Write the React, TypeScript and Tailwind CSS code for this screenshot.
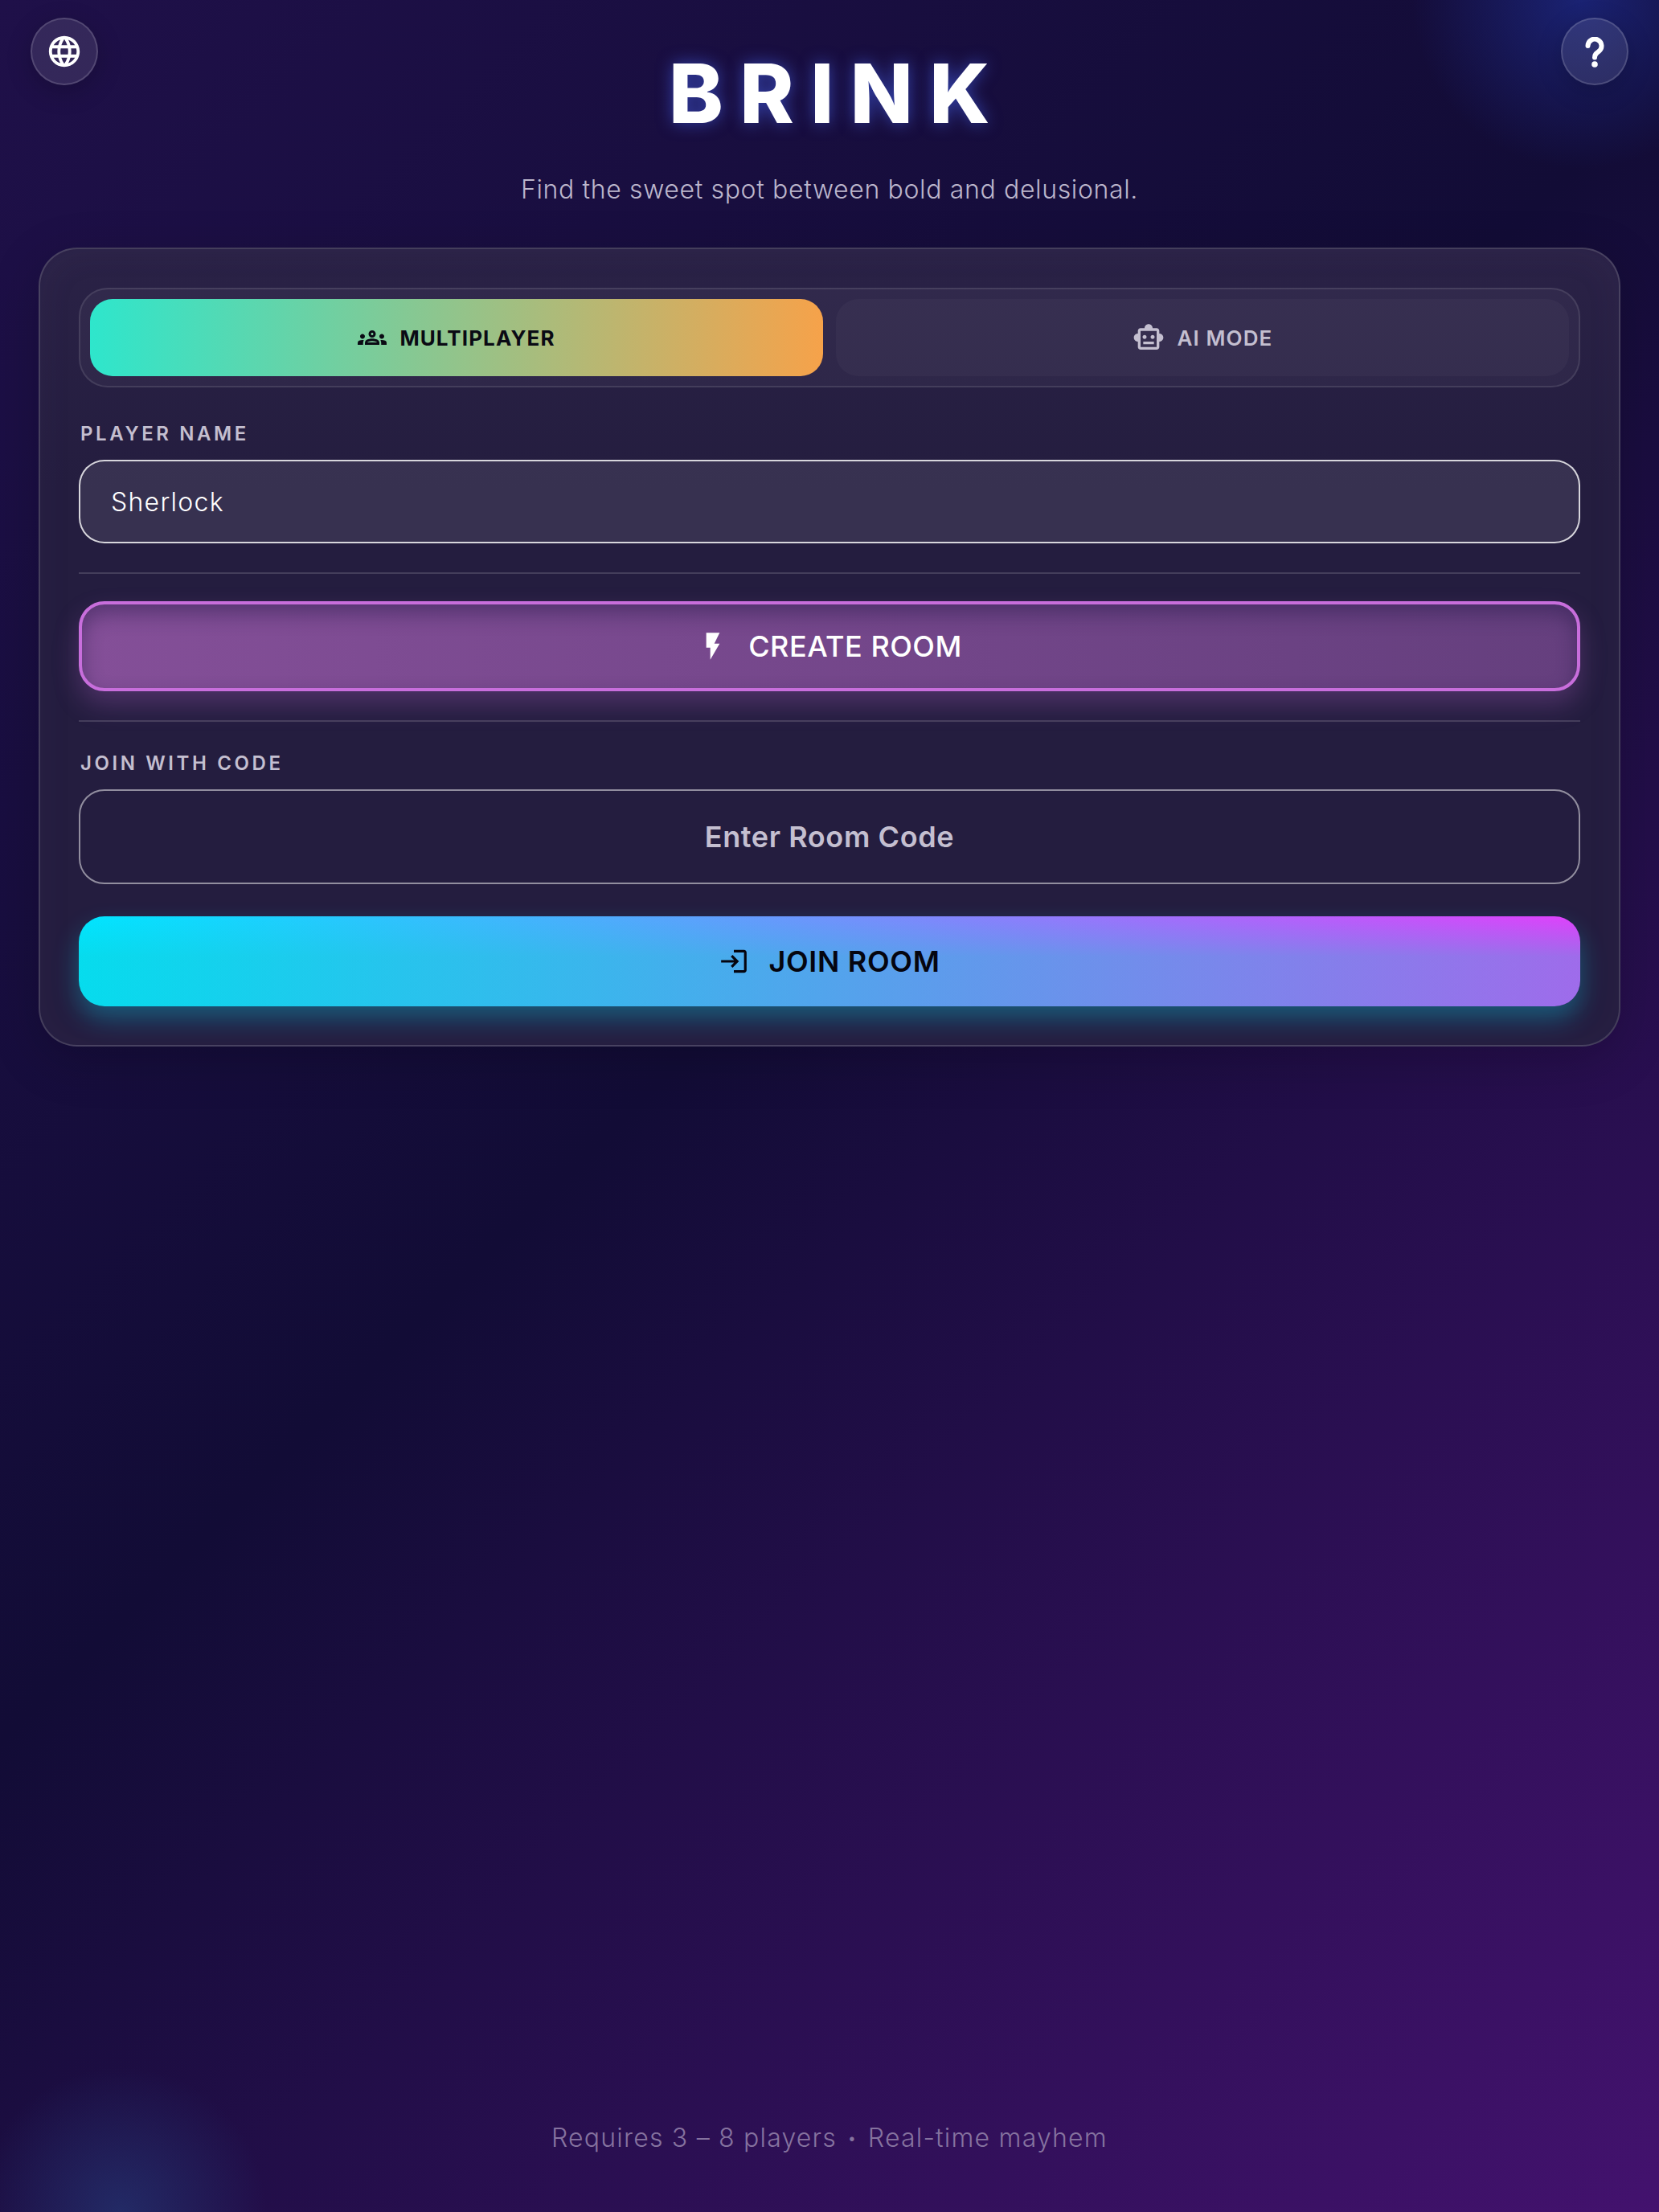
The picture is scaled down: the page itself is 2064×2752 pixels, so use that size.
import { MdOutlineGroups, MdOutlineSmartToy, MdFlashOn, MdLogin, MdOutlineLanguage } from 'react-icons/md';

const sans = 'font-["Inter","Noto_Sans",sans-serif]';

function RoundButton({ children }: { children: React.ReactNode }) {
  return (
    <button className="flex h-[84px] w-[84px] items-center justify-center rounded-full border-2 border-white/15 bg-white/10 text-white shadow-[0_8px_32px_rgba(0,0,0,0.2)]">
      {children}
    </button>
  );
}

function HelpIcon() {
  return (
    <svg className="mt-[2px]" width="24" height="38" viewBox="0 0 24 38" fill="none" stroke="currentColor" strokeWidth="6" strokeLinecap="round">
      <path d="M3.5 11a8.5 8.5 0 1 1 13.5 7c-3 2.2-5 3.6-5 7.5" />
      <circle cx="12" cy="34" r="3.8" fill="currentColor" stroke="none" />
    </svg>
  );
}

function Divider() {
  return <div className="h-[2px] w-full bg-white/15" />;
}

function FieldLabel({ children }: { children: React.ReactNode }) {
  return <div className="pl-[2px] text-[24px] leading-[32px] font-semibold tracking-[0.15em] text-[#c4bfd0]">{children}</div>;
}

export default function App() {
  return (
    <div
      className={`${sans} relative flex h-[2752px] w-[2064px] flex-col overflow-hidden bg-[radial-gradient(circle_at_1967px_0px,rgba(28,40,130,0.8),transparent_210px),radial-gradient(circle_at_151px_2752px,rgba(35,45,105,0.9),transparent_180px),linear-gradient(135deg,#1f1049_0%,#120c36_45%,#43126e_100%)]`}
    >
      {/* top corners */}
      <div className="absolute top-[22px] left-[38px]">
        <RoundButton>
          <MdOutlineLanguage className="h-[46px] w-[46px]" />
        </RoundButton>
      </div>
      <div className="absolute top-[22px] right-[38px]">
        <RoundButton>
          <HelpIcon />
        </RoundButton>
      </div>

      <header className="flex h-[308px] flex-col items-center">
        <h1 className="mt-[56px] pl-[20px] text-[102px] leading-[120px] font-extrabold tracking-[0.2em] text-white [text-shadow:0_0_20px_rgba(70,100,240,0.6)]">
          BRINK
        </h1>
        <p className="mt-[36px] text-[32px] leading-[48px] font-light tracking-[0.02em] text-[#bcb6cc]">
          Find the sweet spot between bold and delusional.
        </p>
      </header>

      <main className="mx-[48px] flex h-[994px] flex-col rounded-[48px] border-2 border-white/15 bg-[linear-gradient(180deg,#2a2246,#241d3f_30%,#241d3f)] p-[48px] shadow-[0_16px_64px_rgba(0,0,0,0.18),inset_0_0_48px_rgba(120,80,160,0.06)]">
        <div className="flex h-[124px] gap-[16px] rounded-[36px] border-2 border-white/10 bg-white/[0.04] p-[12px]">
          <button className="flex flex-1 items-center justify-center gap-[16px] rounded-[28px] bg-[linear-gradient(90deg,#2ee6cc,#f6a24a)] text-[26px] font-bold tracking-[1.1px] text-[#0a0a14]">
            <MdOutlineGroups className="h-[36px] w-[36px]" />
            MULTIPLAYER
          </button>
          <button className="flex flex-1 items-center justify-center gap-[16px] rounded-[28px] bg-white/[0.03] text-[26px] font-semibold tracking-[1.1px] text-[#c4bfd0]">
            <MdOutlineSmartToy className="h-[40px] w-[40px]" />
            AI MODE
          </button>
        </div>

        <div className="mt-[42px]">
          <FieldLabel>PLAYER NAME</FieldLabel>
        </div>
        <div className="mt-[16px] flex h-[104px] items-center rounded-[32px] border-2 border-white/80 bg-white/[0.09] px-[38px] pt-[2px] text-[32px] font-light tracking-[0.04em] text-white">
          Sherlock
        </div>

        <div className="mt-[36px]">
          <Divider />
        </div>

        <button className="mt-[34px] flex h-[112px] items-center justify-center gap-[24px] rounded-[32px] border-4 border-[#c86edc] bg-[linear-gradient(90deg,#844f98,#653f7e)] text-[36px] font-medium tracking-[0.5px] text-white shadow-[0_16px_32px_rgba(200,110,220,0.25),inset_0_12px_24px_rgba(35,25,70,0.45)]">
          <MdFlashOn className="h-[40px] w-[40px]" />
          CREATE ROOM
        </button>

        <div className="mt-[36px]">
          <Divider />
        </div>

        <div className="mt-[36px]">
          <FieldLabel>JOIN WITH CODE</FieldLabel>
        </div>
        <div className="mt-[16px] flex h-[118px] items-center justify-center rounded-[32px] border-2 border-white/50 text-[36px] font-semibold tracking-[0.6px] text-[#c4bfd0]">
          Enter Room Code
        </div>

        <button className="mt-[40px] flex h-[112px] items-center justify-center gap-[24px] rounded-[32px] bg-[linear-gradient(180deg,transparent,rgba(20,200,200,0.32)_45%),linear-gradient(90deg,#00e5ff,#e040fb)] text-[36px] font-semibold tracking-[0.7px] text-[#05050f] shadow-[0_16px_32px_rgba(0,229,255,0.3)]">
          <MdLogin className="h-[38px] w-[38px]" />
          JOIN ROOM
        </button>
      </main>

      <footer className="absolute bottom-[68px] w-full text-center text-[32px] leading-[48px] font-light tracking-[1.2px] text-[#86739f]">
        Requires 3 – 8 players <span className="mx-[3px] align-[4px] text-[20px] leading-none">•</span> Real-time mayhem
      </footer>
    </div>
  );
}
